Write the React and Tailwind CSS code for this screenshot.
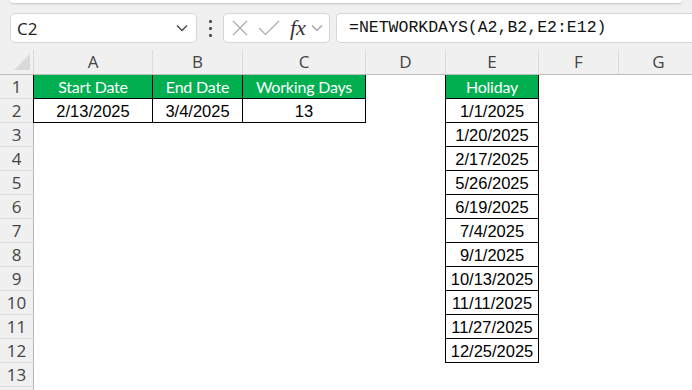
import React from "react";

const cols = [
  { key: "A", w: 119 },
  { key: "B", w: 90 },
  { key: "C", w: 123 },
  { key: "D", w: 80 },
  { key: "E", w: 93 },
  { key: "F", w: 80 },
  { key: "G", w: 80 },
];

const holidays = [
  "1/1/2025",
  "1/20/2025",
  "2/17/2025",
  "5/26/2025",
  "6/19/2025",
  "7/4/2025",
  "9/1/2025",
  "10/13/2025",
  "11/11/2025",
  "11/27/2025",
  "12/25/2025",
];

const segoe = { fontFamily: '"Open Sans", "Noto Sans", sans-serif' };
const calibri = { fontFamily: 'Lato, "Open Sans", sans-serif' };
const arial = { fontFamily: '"Liberation Sans", Arial, sans-serif' };

function cellContent(row, col) {
  if (row === 1) {
    if (col === "A") return { text: "Start Date", type: "head" };
    if (col === "B") return { text: "End Date", type: "head" };
    if (col === "C") return { text: "Working Days", type: "head" };
    if (col === "E") return { text: "Holiday", type: "head" };
  }
  if (row === 2) {
    if (col === "A") return { text: "2/13/2025", type: "data" };
    if (col === "B") return { text: "3/4/2025", type: "data" };
    if (col === "C") return { text: "13", type: "data" };
  }
  if (col === "E" && row >= 2 && row <= 12) {
    return { text: holidays[row - 2], type: "data" };
  }
  return null;
}

function Cell({ row, col, w }) {
  const c = cellContent(row, col);
  if (!c) {
    return <div className="h-[24px] shrink-0 bg-white" style={{ width: w }} />;
  }
  const leftShadow = col === "A" || col === "E";
  const base =
    "h-[24px] shrink-0 flex items-center justify-center border-r border-b border-black " +
    (leftShadow ? "shadow-[-1px_0_0_#000] " : "");
  if (c.type === "head") {
    return (
      <div
        className={base + "bg-[#00b050] text-white text-[16px] tracking-[-0.2px] pt-[1px]"}
        style={{ width: w, ...calibri }}
      >
        {c.text}
      </div>
    );
  }
  return (
    <div
      className={base + "bg-white text-black text-[16.5px] pt-[2px]"}
      style={{ width: w, ...arial }}
    >
      {c.text}
    </div>
  );
}

export default function App() {
  const rows = Array.from({ length: 14 }, (_, i) => i + 1);
  return (
    <div className="w-[692px] h-[390px] overflow-hidden bg-[#f0f0f0] relative">
      {/* ribbon bottom edge */}
      <div className="h-[3px] mx-[10px] bg-white rounded-b-[6px] shadow-[0_1px_2px_rgba(0,0,0,0.18)]" />
      {/* formula bar */}
      <div className="flex items-center h-[30px] mt-[10px]">
        <div
          className="ml-[10px] w-[187px] h-[30px] bg-white border border-[#d6d6d6] rounded-[5px] flex items-center justify-between pl-[6px] pr-[8px]"
          style={segoe}
        >
          <span className="text-[17px] text-[#222] leading-none">C2</span>
          <svg width="12" height="8" viewBox="0 0 12 8">
            <polyline points="1,1.5 6,6.5 11,1.5" fill="none" stroke="#444" strokeWidth="1.3" />
          </svg>
        </div>
        <div className="w-[26px] flex flex-col items-center gap-[4px]">
          <div className="w-[3px] h-[3px] bg-[#555] rounded-[1px]" />
          <div className="w-[3px] h-[3px] bg-[#555] rounded-[1px]" />
          <div className="w-[3px] h-[3px] bg-[#555] rounded-[1px]" />
        </div>
        <div className="w-[107px] h-[30px] bg-white border border-[#d6d6d6] rounded-[5px] flex items-center pl-[8px]">
          <svg width="16" height="16" viewBox="0 0 16 16" className="shrink-0">
            <path d="M1 1 L15 15 M15 1 L1 15" stroke="#ababab" strokeWidth="1.2" fill="none" />
          </svg>
          <svg width="22" height="16" viewBox="0 0 22 16" className="ml-[10px] shrink-0">
            <polyline points="1,8 7.5,14.5 21,1" stroke="#ababab" strokeWidth="1.2" fill="none" />
          </svg>
          <span
            className="ml-[10px] text-[22px] italic text-[#333] leading-none font-normal"
            style={{ fontFamily: '"Liberation Serif", "DejaVu Serif", serif' }}
          >
            fx
          </span>
          <svg width="12" height="8" viewBox="0 0 12 8" className="ml-[5px] shrink-0">
            <polyline points="1,1.5 6,6.5 11,1.5" fill="none" stroke="#9a9a9a" strokeWidth="1.1" />
          </svg>
        </div>
        <div className="ml-[6px] flex-1 h-[30px] bg-white border border-[#d6d6d6] border-r-0 rounded-l-[5px] flex items-center pl-[12px]">
          <span
            className="text-[16.5px] text-[#111] leading-none pt-[1px]"
            style={{ fontFamily: '"Liberation Mono", "DejaVu Sans Mono", monospace' }}
          >
            =NETWORKDAYS(A2,B2,E2:E12)
          </span>
        </div>
      </div>
      {/* sheet */}
      <div className="mt-[7px] flex flex-col">
        {/* column header row */}
        <div className="flex h-[25px] border-b border-[#bdbdbd]">
          <div className="w-[34px] shrink-0 relative bg-[#f0f0f0] border-r border-[#d8d8d8]">
            <svg width="34" height="24" viewBox="0 0 34 24" className="absolute left-0 top-0">
              <polygon points="30,4 30,20 14,20" fill="#d9d9d9" />
            </svg>
          </div>
          {cols.map((c) => (
            <div
              key={c.key}
              className="shrink-0 flex items-center justify-center border-r border-[#dcdcdc] text-[17px] text-[#444] bg-[#f0f0f0]"
              style={{ width: c.w, ...segoe }}
            >
              {c.key}
            </div>
          ))}
        </div>
        {rows.map((r) => (
          <div key={r} className="flex h-[24px]">
            <div
              className="w-[34px] shrink-0 h-[24px] flex items-center justify-center bg-[#f0f0f0] border-r border-[#b5b5b5] border-b border-b-[#dcdcdc] text-[17px] text-[#444]"
              style={segoe}
            >
              {r <= 13 ? r : ""}
            </div>
            {cols.map((c) => (
              <Cell key={c.key} row={r} col={c.key} w={c.w} />
            ))}
          </div>
        ))}
      </div>
    </div>
  );
}
